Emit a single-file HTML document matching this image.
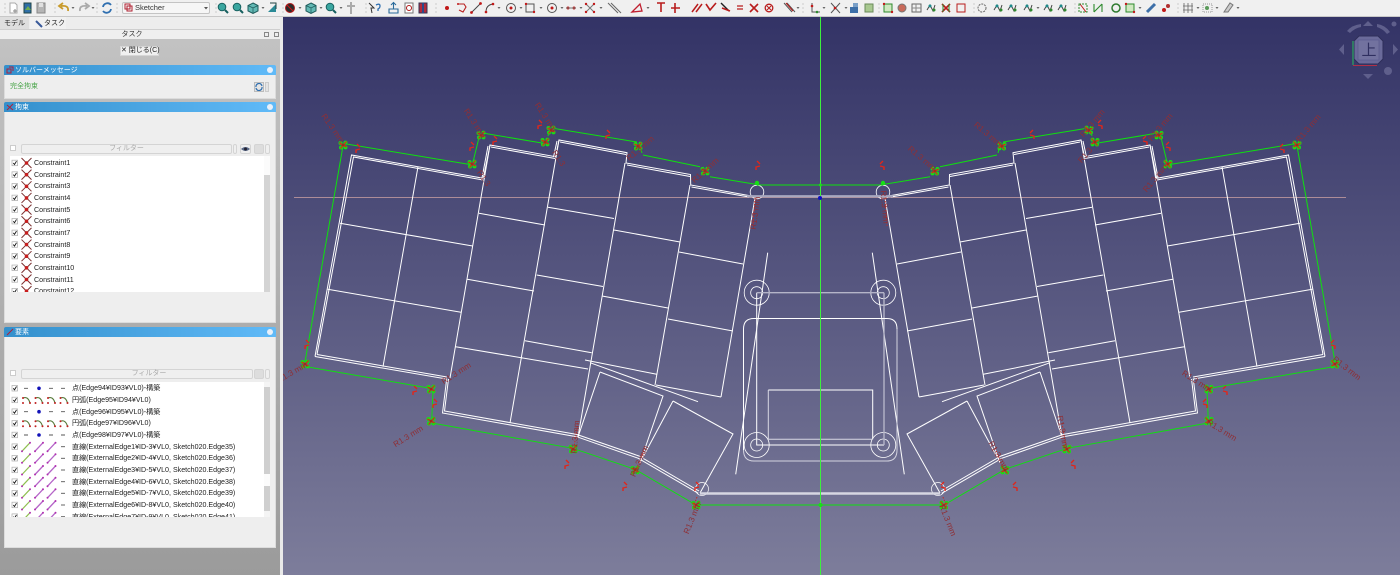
<!DOCTYPE html>
<html lang="ja"><head><meta charset="utf-8"><title>FreeCAD Sketcher</title>
<style>
html,body{margin:0;padding:0;width:1400px;height:575px;overflow:hidden;background:#f0f0f0;font-family:"Liberation Sans","Noto Sans CJK JP",sans-serif;color:#222}
*{box-sizing:border-box}
.a{position:absolute}
#view{position:absolute;left:283px;top:17px;width:1117px;height:558px;background:linear-gradient(#333366,#7d7d9b)}
#tb{position:absolute;left:0;top:0;width:1400px;height:17px;background:#f0f0f0;border-bottom:1px solid #c8c8c8;filter:blur(.35px)}
#side{position:absolute;left:0;top:17px;width:283px;height:558px;background:#ededed;filter:blur(.3px);overflow:hidden}
#gray{position:absolute;left:0;top:21px;width:280px;height:537px;background:linear-gradient(#c2c2c2,#9b9b9b)}
.sec{position:absolute;left:4px;width:272px;background:#eeeeee;border:1px solid #dcdcdc;border-top:0}
.hd{position:absolute;left:4px;width:272px;height:10px;background:linear-gradient(90deg,#3490cc,#60baf8);color:#fff;font-size:7px;line-height:12px;padding-left:11px;border-radius:2px 2px 0 0;overflow:hidden}
.x{position:absolute;right:3px;top:2px;width:6px;height:6px;border-radius:50%;background:#e8f0fa}
.flt{position:absolute;height:10px;background:#efefef;border:1px solid #d4d4d4;border-radius:2px;color:#aaa;font-size:7px;line-height:8px;text-align:center}
.list{position:absolute;left:10px;width:260px;background:#fff;overflow:hidden}
.r{position:absolute;white-space:nowrap;font-size:7.1px;line-height:10px;color:#222}
</style></head><body>

<div id="view"></div>

<svg class="a" style="left:0;top:0" width="1400" height="575" viewBox="0 0 1400 575" fill="none">
<defs>
<g id="cl">
<circle cx="-2.5" cy="-2" r="2" fill="#15e015"/><circle cx="2.5" cy="-2.4" r="2" fill="#15e015"/><circle cx="-2" cy="2.5" r="2" fill="#15e015"/><circle cx="2.5" cy="2.4" r="2" fill="#15e015"/>
<path d="M-3.5-2 3.5 2M-2.500 3.500 3.500-3.500" stroke="#d8241a" stroke-width="1.300"/>
<circle cx="0" cy="0" r="1.300" fill="#a82a1a"/>
</g>
<g id="hk"><path d="M-2 4-2 1 2 0M-1-5 2-2" stroke="#e0261a" stroke-width="1.400"/></g>
<g id="half">
 <g stroke="#fff" stroke-width="1">
 <path d="M418 166.7 383 366.7M340 223.3 472.7 246M327.7 289.3 461 312.3"/>
 <path d="M490 145 450 378M479 213.3 545 225M467.3 279.3 534 291M455.7 346.7 588 369"/>
 <path d="M559 140 510 423M548 207.3 614 218.5M536.7 275 603 286.5M525 340.7 591.7 352.7"/>
 <path d="M625 163 578 437M614 230 680 242M602 296 668 308M585 360 656.7 374.3"/>
 <path d="M690 185 655 385M679 252 743 264M668 319 733 331M656 385 721 397M755 198 721 397"/>
 <path d="M590 362.7 698 401.7M600 372 663 396 640 463M600 372 578 437M673 401 733 434 700 493M673 401 643 457"/>
 <path d="M315 356.5 351.5 155 483.3 178.3 490 145 555.5 156.7 559 140 627 152.7 626 163 690.5 174.5 690.7 185 750 195.7"/>
 <path d="M317 354.5 353.5 157 483 180M488 146 482 178M491 147 555 158.5M557 141 553.5 157M560 142 626 154.5M627 165 690 176.5M691.5 187 749 197"/>
 <path d="M315 356.5 446.7 379 442.5 413 576.7 436.7 638.3 458.3 698.3 493.3"/>
 <path d="M317 354.5 447 377M448.5 379 444.5 411 577 434.5 639 456 699 491"/>
 <path d="M767.7 252.7 735.7 474.3"/>
 <circle cx="757" cy="192" r="6.8" stroke-width=".8"/><circle cx="702" cy="489" r="6.5" stroke-width=".7"/>
 <circle cx="756.7" cy="292.7" r="12.5" stroke-width=".8"/><circle cx="756.7" cy="292.7" r="6" stroke-width=".8"/>
 <circle cx="756.7" cy="445" r="12.5" stroke-width=".8"/><circle cx="756.7" cy="445" r="6" stroke-width=".8"/>
 </g>
 <g stroke="#0fe00f" stroke-width="1">
 <path d="M305 362 343 146M343.3 143.5 473 165M473 162 480 133.5M484 133.3 542 143M548 136 550 128.3M553 128.3 637 142M640 145 642 153M643 155 700 166.7M703 167 707 175M710 176.7 757 184.5"/>
 <path d="M757 185 820 185M306.7 366.7 430 388.3M433 391 431.7 420M433.3 423.3 572.7 448.3 635 469.3 696 505 820 505"/>
 </g>
 <use href="#cl" x="343" y="145"/><use href="#cl" x="472" y="164"/><use href="#cl" x="481" y="135"/><use href="#cl" x="545" y="142"/><use href="#cl" x="551" y="130"/><use href="#cl" x="638" y="146"/><use href="#cl" x="705" y="171"/><use href="#cl" x="305" y="364"/><use href="#cl" x="431" y="389"/><use href="#cl" x="431" y="421"/><use href="#cl" x="573" y="449"/><use href="#cl" x="635" y="470"/><use href="#cl" x="696" y="505"/>
 <circle cx="757" cy="183" r="2.2" fill="#15e015"/>
 <use href="#hk" x="358" y="149"/><use href="#hk" x="472" y="147"/><use href="#hk" x="495" y="141"/><use href="#hk" x="540" y="125"/><use href="#hk" x="608" y="135"/><use href="#hk" x="758" y="166"/><use href="#hk" x="415" y="391"/><use href="#hk" x="435" y="404"/><use href="#hk" x="307" y="345"/><use href="#hk" x="567" y="465"/><use href="#hk" x="625" y="487"/><use href="#hk" x="697" y="487"/>
 <path d="M755 198 753 226M578 423 574 447M645 448 636 470M697 497 693 508" stroke="#c82a20" stroke-width="1" stroke-dasharray="1.5 1.5"/>
</g>
</defs>

<path d="M294 197.5H1346" stroke="#ad8c98" stroke-width="1"/>
<use href="#half"/>
<use href="#half" transform="translate(1640 0) scale(-1 1)"/>

<g stroke="#fff" stroke-width="1">
<path d="M756.7 292.7V445H884" />
<path d="M756.7 292.7H884" stroke="#b4b4c8" stroke-width="1.4"/>
<path d="M884 292.7V445" stroke="#b4b4c8" stroke-width="1.4"/>
<path d="M743.5 450V329Q743.5 318.5 754 318.5H887Q897 318.5 897 329"/>
<path d="M897 329V450Q897 461 887 461H754Q743.5 461 743.5 450" stroke="#d4d4e0"/>
<path d="M768.3 390H872.7V439.3" /><path d="M768.3 390V439.3H872.7" stroke="#d8d8e4"/>
</g>
<path d="M700 493.5H940" stroke="#d6d6e2" stroke-width="2.4"/>
<path d="M747 196.2H893" stroke="#a7a7bf" stroke-width="2.2"/>
<path d="M820.5 17V575" stroke="#3df03d" stroke-width="1"/>
<circle cx="820" cy="198" r="2" fill="#1010c0"/>
<circle cx="820.5" cy="185" r="1.5" fill="#15e015"/><circle cx="820.5" cy="505" r="2" fill="#15e015"/>

<g font-family="Liberation Sans" font-size="8.200" fill="#8f2f35" text-anchor="middle" style="filter:blur(.25px)">
<text x="333" y="131" transform="rotate(55 333 128)">R1.3 mm</text>
<text x="475" y="126" transform="rotate(57 475 123)">R1.3 mm</text>
<text x="546" y="120" transform="rotate(57 546 117)">R1.3 mm</text>
<text x="640" y="151" transform="rotate(-40 640 148)">R1.3 mm</text>
<text x="705" y="173" transform="rotate(-42 705 170)">R1.3 mm</text>
<text x="755" y="216" transform="rotate(-82 755 213)">R1.3 mm</text>
<text x="484" y="181" transform="rotate(55 484 178)">R1.3</text>
<text x="559" y="161" transform="rotate(57 559 158)">R1.3</text>
<text x="408" y="439" transform="rotate(-32 408 436)">R1.3 mm</text>
<text x="456" y="376" transform="rotate(-33 456 373)">R1.3 mm</text>
<text x="575" y="440" transform="rotate(-85 575 437)">R1.3 mm</text>
<text x="639" y="464" transform="rotate(-66 639 461)">R1.3 mm</text>
<text x="692" y="521" transform="rotate(-68 692 518)">R1.3 mm</text>
<text x="292" y="375" transform="rotate(-30 292 372)">R1.3 mm</text>
<text x="1308" y="131" transform="rotate(-50 1308 128)">R1.3 mm</text>
<text x="1160" y="130" transform="rotate(-50 1160 127)">R1.3 mm</text>
<text x="1092" y="126" transform="rotate(-50 1092 123)">R1.3 mm</text>
<text x="988" y="137" transform="rotate(40 988 134)">R1.3 mm</text>
<text x="922" y="161" transform="rotate(40 922 158)">R1.3 mm</text>
<text x="1155" y="181" transform="rotate(-50 1155 178)">R1.3 mm</text>
<text x="1085" y="158" transform="rotate(-50 1085 155)">R1.3</text>
<text x="1222" y="433" transform="rotate(32 1222 430)">R1.3 mm</text>
<text x="1197" y="384" transform="rotate(33 1197 381)">R1.3 mm</text>
<text x="1063" y="435" transform="rotate(80 1063 432)">R1.3 mm</text>
<text x="999" y="459" transform="rotate(60 999 456)">R1.3 mm</text>
<text x="948" y="523" transform="rotate(68 948 520)">R1.3 mm</text>
<text x="885" y="210" transform="rotate(85 885 207)">R1.3 mm</text>
<text x="1347" y="371" transform="rotate(38 1347 368)">R1.3 mm</text>
</g>

<!-- navi cube -->
<g>
<path d="M1359 36H1378L1383 41V59L1378 64H1359L1354 59V41Z" fill="#6a6a9a" stroke="#2e2e5a" stroke-width="1"/>
<path d="M1358 40H1379V60H1358Z" fill="#72729f" stroke="#55558a" stroke-width=".6"/>
<path d="M1353 41V65" stroke="#2f8a63" stroke-width="1.6"/><path d="M1353 65.5H1377" stroke="#b03048" stroke-width="1"/>
<text x="1369" y="55" font-size="15" text-anchor="middle" fill="#2f2f60" font-family="Noto Sans CJK JP">上</text>
<g fill="#5f5f8c">
<path d="M1368 21 1373 26H1363Z"/><path d="M1344 44V55L1339 49.5Z"/><path d="M1393 44V55L1398 49.5Z"/><path d="M1363 74H1373L1368 79Z"/>
<path d="M1347 31Q1352 25 1361 24L1361 27Q1355 28 1350 33Z"/><path d="M1377 24Q1385 25 1390 32L1387 34Q1383 29 1377 27Z"/>
<circle cx="1394" cy="24" r="2.5"/><circle cx="1388" cy="71" r="4"/>
</g>
</g>
</svg>

<div id="side">
 <div id="gray"></div>
 <div class="a" style="left:0;top:0;width:29px;height:13px;background:#dedede;font-size:7px;line-height:14px;text-align:center">モデル</div>
 <div class="a" style="left:30px;top:0;width:36px;height:13px;background:#f1f1f1;font-size:7px;line-height:14px;padding-left:14px">タスク</div>
 <svg class="a" style="left:35px;top:3px" width="8" height="8"><path d="M1 1 7 7" stroke="#3a5a9a" stroke-width="2"/></svg>
 <div class="a" style="left:0;top:12px;width:280px;height:1px;background:#cfcfcf"></div>
 <div class="a" style="left:0;top:13px;width:280px;height:9px;background:#efefef;font-size:7px;line-height:10px;text-align:center;padding-right:16px;color:#333">タスク</div>
 <div class="a" style="left:264px;top:15px;width:5px;height:5px;border:1px solid #888"></div>
 <div class="a" style="left:274px;top:15px;width:5px;height:5px;border:1px solid #888"></div>

 <div class="a" style="left:120px;top:29px;width:39px;height:10px;background:#f0f0f0;border:1px solid #d6d6d6;font-size:7px;line-height:8px;text-align:center;white-space:nowrap">✕ 閉じる(C)</div>

 <div class="sec" style="top:58px;height:24px"></div>
 <div class="hd" style="top:48px">ソルバーメッセージ<span class="x"></span></div>
 <svg class="a" style="left:6px;top:49px" width="8" height="8"><path d="M1 3H5V7H1ZM3 1H7V5" stroke="#b0203a" fill="none"/></svg>
 <div class="a" style="left:10px;top:65px;font-size:7px;line-height:10px;color:#4ca64c">完全拘束</div>
 <div class="a" style="left:254px;top:65px;width:10px;height:10px;background:#e4e4e4;border:1px solid #bbb"></div>
 <svg class="a" style="left:255px;top:66px" width="8" height="8"><path d="M1 4A3 3 0 0 1 7 3M7 4A3 3 0 0 1 1 5" stroke="#2f6fb0" fill="none" stroke-width="1.2"/></svg>
 <div class="a" style="left:265px;top:65px;width:4px;height:10px;background:#e4e4e4;border:1px solid #ccc"></div>

 <div class="sec" style="top:95px;height:211px"></div>
 <div class="hd" style="top:85px">拘束<span class="x"></span></div>
 <svg class="a" style="left:6px;top:86px" width="8" height="8"><path d="M1 7 7 1M1 2 7 7" stroke="#b0203a"/></svg>
 <div class="a" style="left:10px;top:128px;width:6px;height:6px;background:#fff;border:1px solid #ccc"></div>
 <div class="flt" style="left:21px;top:127px;width:211px">フィルター</div>
 <div class="flt" style="left:233px;top:127px;width:4px"></div>
 <div class="flt" style="left:240px;top:127px;width:11px"></div>
 <svg class="a" style="left:241px;top:129px" width="9" height="6"><path d="M0 3Q4.500-1 9 3 4.500 7 0 3Z" fill="#5a6a88"/><circle cx="4.500" cy="3" r="1.500" fill="#223"/></svg>
 <div class="flt" style="left:254px;top:127px;width:10px;background:#ddd"></div>
 <div class="flt" style="left:265px;top:127px;width:5px"></div>

 <div class="list" style="top:139px;height:136px">
  <div class="r" style="left:24px;top:2px">Constraint1</div>
  <div class="r" style="left:24px;top:13.650px">Constraint2</div>
  <div class="r" style="left:24px;top:25.300px">Constraint3</div>
  <div class="r" style="left:24px;top:36.950px">Constraint4</div>
  <div class="r" style="left:24px;top:48.600px">Constraint5</div>
  <div class="r" style="left:24px;top:60.250px">Constraint6</div>
  <div class="r" style="left:24px;top:71.900px">Constraint7</div>
  <div class="r" style="left:24px;top:83.550px">Constraint8</div>
  <div class="r" style="left:24px;top:95.200px">Constraint9</div>
  <div class="r" style="left:24px;top:106.850px">Constraint10</div>
  <div class="r" style="left:24px;top:118.500px">Constraint11</div>
  <div class="r" style="left:24px;top:130.150px">Constraint12</div>
  <svg class="a" style="left:0;top:0" width="24" height="136" fill="none">
   <defs><g id="cr"><rect x="2" y="-2.800" width="5.500" height="5.500" fill="#fff" stroke="#aaa" stroke-width=".7"/><path d="M3.300 0 4.500 1.500 6.500-1.800" stroke="#111" stroke-width=".9"/><path d="M11.500-5 21.500 5M21.500-5 11.500 5" stroke="#7a3030" stroke-width="1"/><circle cx="16.500" cy="0" r="1.800" fill="#c81e1e"/></g></defs>
   <use href="#cr" y="7"/><use href="#cr" y="18.650"/><use href="#cr" y="30.300"/><use href="#cr" y="41.950"/><use href="#cr" y="53.600"/><use href="#cr" y="65.250"/><use href="#cr" y="76.900"/><use href="#cr" y="88.550"/><use href="#cr" y="100.200"/><use href="#cr" y="111.850"/><use href="#cr" y="123.500"/><use href="#cr" y="135.150"/>
  </svg>
  <div class="a" style="left:253.500px;top:0;width:6.500px;height:136px;background:#d4d4d4"></div>
  <div class="a" style="left:253.500px;top:0;width:6.500px;height:19px;background:#fbfbfb"></div>
 </div>

 <div class="sec" style="top:320px;height:211px"></div>
 <div class="hd" style="top:310px">要素<span class="x"></span></div>
 <svg class="a" style="left:6px;top:311px" width="8" height="8"><path d="M1 7 7 1" stroke="#b0203a"/></svg>
 <div class="a" style="left:10px;top:353px;width:6px;height:6px;background:#fff;border:1px solid #ccc"></div>
 <div class="flt" style="left:21px;top:352px;width:232px;padding-left:24px">フィルター</div>
 <div class="flt" style="left:254px;top:352px;width:10px;background:#ddd"></div>
 <div class="flt" style="left:265px;top:352px;width:5px"></div>

 <div class="list" style="top:365px;height:135px">
  <div class="r" style="left:62px;top:1.300px">点(Edge94¥ID93¥VL0)-構築</div>
  <div class="r" style="left:62px;top:13px">円弧(Edge95¥ID94¥VL0)</div>
  <div class="r" style="left:62px;top:24.700px">点(Edge96¥ID95¥VL0)-構築</div>
  <div class="r" style="left:62px;top:36.300px">円弧(Edge97¥ID96¥VL0)</div>
  <div class="r" style="left:62px;top:48px">点(Edge98¥ID97¥VL0)-構築</div>
  <div class="r" style="left:62px;top:59.700px">直線(ExternalEdge1¥ID-3¥VL0, Sketch020.Edge35)</div>
  <div class="r" style="left:62px;top:71.300px">直線(ExternalEdge2¥ID-4¥VL0, Sketch020.Edge36)</div>
  <div class="r" style="left:62px;top:83px">直線(ExternalEdge3¥ID-5¥VL0, Sketch020.Edge37)</div>
  <div class="r" style="left:62px;top:94.700px">直線(ExternalEdge4¥ID-6¥VL0, Sketch020.Edge38)</div>
  <div class="r" style="left:62px;top:106.300px">直線(ExternalEdge5¥ID-7¥VL0, Sketch020.Edge39)</div>
  <div class="r" style="left:62px;top:118px">直線(ExternalEdge6¥ID-8¥VL0, Sketch020.Edge40)</div>
  <div class="r" style="left:62px;top:129.700px">直線(ExternalEdge7¥ID-9¥VL0, Sketch020.Edge41)</div>
  <svg class="a" style="left:0;top:0" width="62" height="135" fill="none">
   <defs>
   <g id="ck"><rect x="2" y="-2.800" width="5.500" height="5.500" fill="#fff" stroke="#aaa" stroke-width=".7"/><path d="M3.300 0 4.500 1.500 6.500-1.800" stroke="#111" stroke-width=".9"/></g>
   <g id="ep"><use href="#ck"/><path d="M14 0H18M39 0H43M51 0H55" stroke="#555" stroke-width=".9"/><circle cx="29" cy="0" r="1.800" fill="#1212b8"/></g>
   <g id="ea"><use href="#ck"/><g id="a1"><path d="M13 -2Q18-4 20 3" stroke="#567a3a" stroke-width="1.100"/><circle cx="13" cy="-2" r="1" fill="#c02020"/><circle cx="13" cy="3" r="1" fill="#c02020"/><circle cx="20" cy="3" r="1" fill="#c02020"/></g><use href="#a1" x="12.500"/><use href="#a1" x="25"/><use href="#a1" x="37.500"/></g>
   <g id="el"><use href="#ck"/><g id="l1"><path d="M12 4.500 20-4" stroke="#8fbf50" stroke-width="1.200"/><circle cx="20" cy="-4" r="1" fill="#b030b0"/><circle cx="12" cy="4.500" r="1" fill="#b030b0"/></g><path d="M25 4.500 33-4M37.500 4.500 45.500-4" stroke="#b565c8" stroke-width="1.300"/><circle cx="33" cy="-4" r="1" fill="#b030b0"/><circle cx="25" cy="4.500" r="1" fill="#b030b0"/><circle cx="45.500" cy="-4" r="1" fill="#b030b0"/><circle cx="37.500" cy="4.500" r="1" fill="#b030b0"/><path d="M51 0H55" stroke="#555" stroke-width=".9"/></g>
   </defs>
   <use href="#ep" y="6.300"/><use href="#ea" y="18"/><use href="#ep" y="29.700"/><use href="#ea" y="41.300"/><use href="#ep" y="53"/>
   <use href="#el" y="64.700"/><use href="#el" y="76.300"/><use href="#el" y="88"/><use href="#el" y="99.700"/><use href="#el" y="111.300"/><use href="#el" y="123"/><use href="#el" y="134.700"/>
  </svg>
  <div class="a" style="left:253.500px;top:0;width:6.500px;height:135px;background:#cfcfcf"></div>
  <div class="a" style="left:253.500px;top:0;width:6.500px;height:5px;background:#f4f4f4"></div>
  <div class="a" style="left:253.500px;top:92px;width:6.500px;height:12px;background:#fbfbfb"></div>
  <div class="a" style="left:253.500px;top:129px;width:6.500px;height:6px;background:#f4f4f4"></div>
 </div>
</div>
<div class="a" style="left:280px;top:17px;width:3px;height:558px;background:#e9e9e9"></div>

<div id="tb">
<div class="a" style="left:122px;top:2px;width:88px;height:12px;background:#f6f6f6;border:1px solid #c4c4c4;border-radius:2px;font-size:7.500px;line-height:10px;padding-left:12px;color:#333">Sketcher</div>
<svg class="a" style="left:0;top:0" width="1400" height="16" fill="none">
<defs>
<g id="mg"><circle cx="-1" cy="-1" r="3.800" fill="#3aa6a0" stroke="#17605f"/><path d="M2 2 5 5" stroke="#17605f" stroke-width="2"/></g>
<g id="cb"><path d="M0-5 5-2.500V3L0 5.500-5 3V-2.500Z" fill="#62b8b4" stroke="#1d5a5a"/><path d="M-5-2.500 0 0 5-2.500M0 0V5.500" stroke="#1d5a5a" stroke-width=".7"/></g>
<g id="dt"><path d="M0 3.500V4.500M0 7.500V8.500M0 11.500V12.500" stroke="#aaa"/></g>
<path id="da" d="M-1.500 7H1.500L0 9Z" fill="#666"/>
<g id="rd"><circle cx="0" cy="0" r="2" fill="#c01818"/></g>
<g id="rl"><path d="M-4.500 4.500 4.500-4.500" stroke="#444" stroke-width="1"/><circle cx="-4.500" cy="4.500" r="1.400" fill="#c01818"/><circle cx="4.500" cy="-4.500" r="1.400" fill="#c01818"/></g>
<g id="rc"><circle cx="0" cy="0" r="4.500" stroke="#555"/><circle cx="0" cy="0" r="1.500" fill="#c01818"/></g>
<g id="rx"><path d="M-4-4 4 4M4-4-4 4" stroke="#b81c1c" stroke-width="1.600"/></g>
<g id="rt"><path d="M-4-4H4M0-4V5" stroke="#b81c1c" stroke-width="1.600"/></g>
<g id="gr"><path d="M-4-4H4V4H-4Z" stroke="#2e8a2e" fill="#cfe8c0"/><circle cx="-4" cy="-4" r="1.200" fill="#c01818"/><circle cx="4" cy="4" r="1.200" fill="#c01818"/></g>
<g id="db"><path d="M-4 2-1-3 2 3 4-3" stroke="#444"/><circle cx="-1" cy="-2" r="1.500" fill="#1d8a8a"/><circle cx="3" cy="2" r="1.500" fill="#2e8a2e"/></g>
</defs>
<g>
<use href="#dt" x="5"/><use href="#dt" x="55"/><use href="#dt" x="97"/><use href="#dt" x="117"/><use href="#dt" x="216"/><use href="#dt" x="283"/><use href="#dt" x="366"/><use href="#dt" x="436"/><use href="#dt" x="803"/><use href="#dt" x="879"/><use href="#dt" x="974"/><use href="#dt" x="1075"/><use href="#dt" x="1178"/>
<path d="M10 3H15L17 5V13H10Z" fill="#fff" stroke="#aaa"/><path d="M13 11H17M15 9V13" stroke="#888"/>
<path d="M24 3H31V13H24Z" fill="#2f6fa8" stroke="#244"/><path d="M25 10 28 6 31 10Z" fill="#6fae4f"/>
<path d="M37 3H45V13H37Z" fill="#b5b5b5" stroke="#888"/><path d="M39 3H43V7H39Z" fill="#e0e0e0"/>
<path d="M68 11Q69 5 61 6M63 3 59 6 63 9" stroke="#c89a2a" stroke-width="1.800"/><use href="#da" x="73"/>
<path d="M80 11Q79 5 87 6M85 3 89 6 85 9" stroke="#aaa" stroke-width="1.800"/><use href="#da" x="93"/>
<path d="M103 7A4.500 4.500 0 0 1 111 5M111 9A4.500 4.500 0 0 1 103 11" stroke="#2f6fb0" stroke-width="1.800"/>
<path d="M125 4H130V9H125ZM127 6H132V11H127Z" stroke="#b02030"/><path d="M204 7H208L206 9.500Z" fill="#555"/>
<use href="#mg" x="223" y="8"/><use href="#mg" x="238" y="8"/><use href="#cb" x="253" y="8"/><use href="#da" x="263"/>
<path d="M268 12 276 4V12Z" fill="#2a8a96"/><path d="M270 3H276V9" stroke="#244"/>
<circle cx="290" cy="8" r="4.500" fill="#2b2b2b" stroke="#b01818"/><path d="M287 5 293 11" stroke="#c01818" stroke-width="1.200"/><use href="#da" x="300"/>
<use href="#cb" x="311" y="8"/><use href="#da" x="321"/><use href="#mg" x="331" y="8"/><use href="#da" x="341"/>
<path d="M351 2V14M347 6H355" stroke="#aaa" stroke-width="2"/>
<path d="M369 3 374 8 371 8 372 13" stroke="#333"/><path d="M376 5Q380 3 380 6 380 8 378 9V11" stroke="#2f6fb0" stroke-width="1.300"/>
<path d="M389 13H398V9H389ZM393.500 9V3M391 5 393.500 2.500 396 5" stroke="#2a6a9a" stroke-width="1.100"/>
<path d="M405 3H413V13H405Z" stroke="#777" fill="#fff"/><circle cx="409" cy="8" r="2.500" stroke="#b01818"/>
<path d="M419 3H427V13H419Z" fill="#b22a3a" stroke="#335"/><path d="M423 3V13" stroke="#2a4a8a" stroke-width="2"/>
<use href="#rd" x="447" y="8"/>
<path d="M458 4H464L466 7 463 12 459 10" stroke="#b82020" stroke-width="1.100"/><circle cx="458" cy="4" r="1" fill="#c01818"/>
<use href="#rl" x="476" y="8"/>
<path d="M486 12Q486 5 493 4" stroke="#444"/><circle cx="486" cy="12" r="1.300" fill="#c01818"/><circle cx="493" cy="4" r="1.300" fill="#c01818"/><use href="#da" x="499"/>
<use href="#rc" x="511" y="8"/><use href="#da" x="521"/>
<path d="M526 4H534V12H526Z" stroke="#555"/><circle cx="526" cy="4" r="1.200" fill="#c01818"/><circle cx="534" cy="12" r="1.200" fill="#c01818"/><use href="#da" x="541"/>
<use href="#rc" x="552" y="8"/><use href="#da" x="562"/>
<circle cx="568" cy="8" r="1.500" fill="#c01818"/><circle cx="574" cy="8" r="1.500" fill="#c01818"/><path d="M566 8H576" stroke="#777"/><use href="#da" x="581"/>
<path d="M586 12 594 4M586 4 594 12" stroke="#777"/><circle cx="586" cy="12" r="1.200" fill="#c01818"/><circle cx="594" cy="4" r="1.200" fill="#c01818"/><circle cx="586" cy="4" r="1.200" fill="#c01818"/><circle cx="594" cy="12" r="1.200" fill="#c01818"/><use href="#da" x="601"/>
<path d="M608 3 618 13M611 3 621 13" stroke="#666"/>
<path d="M632 12 640 4 642 11Z" stroke="#c02030" stroke-width="1.300"/><use href="#da" x="648"/>
<use href="#rt" x="661" y="7"/><path d="M671 8H680M675 3V13" stroke="#b81c1c" stroke-width="1.600"/>
<path d="M692 12 698 4M696 12 702 4" stroke="#b81c1c" stroke-width="1.500"/>
<path d="M706 4 710 10 716 3" stroke="#b81c1c" stroke-width="1.600"/>
<path d="M721 3 729 11" stroke="#222" stroke-width="1.400"/><path d="M722 8 730 11" stroke="#b81c1c" stroke-width="1.600"/>
<path d="M737 6H743M737 9H743" stroke="#b81c1c" stroke-width="1.300"/>
<use href="#rx" x="754" y="8"/>
<circle cx="769" cy="8" r="3.800" stroke="#b81c1c" stroke-width="1.300"/><path d="M767 6 771 10M771 6 767 10" stroke="#b81c1c"/>
<path d="M784 3 792 12M787 3 795 12" stroke="#555"/><path d="M786 3 793 11" stroke="#b81c1c"/><use href="#da" x="798"/>
<path d="M812 3V12H820" stroke="#555"/><circle cx="812" cy="6" r="1.300" fill="#c01818"/><circle cx="817" cy="12" r="1.300" fill="#2e8a2e"/><use href="#da" x="824"/>
<path d="M831 3 840 13M840 3 831 13" stroke="#555"/><circle cx="835" cy="8" r="1.300" fill="#c01818"/><use href="#da" x="846"/>
<path d="M850 7H858V13H850Z" fill="#3d6fa8"/><path d="M853 3H858V7H853Z" fill="#7aa0c8"/>
<path d="M865 4H873V12H865Z" fill="#a8c890" stroke="#6a8a5a"/>
</g>
<g>
<use href="#gr" x="888" y="8"/>
<circle cx="902" cy="8" r="4" fill="#c86a5a" stroke="#777"/>
<path d="M912 4H921V12H912Z" stroke="#666"/><path d="M912 8H921M916 4V12" stroke="#888"/>
<use href="#db" x="931" y="8"/>
<use href="#rx" x="946" y="8"/><path d="M943 4V12M949 4V12" stroke="#2e8a2e"/>
<path d="M957 4H965V12H957Z" stroke="#b81c1c"/>
<circle cx="982" cy="8" r="4" stroke="#666" stroke-dasharray="2 1"/>
<use href="#db" x="998" y="8"/><use href="#db" x="1012" y="8"/><use href="#db" x="1028" y="8"/><use href="#da" x="1038"/>
<use href="#db" x="1048" y="8"/><use href="#db" x="1062" y="8"/>
<path d="M1080 4 1086 12" stroke="#c01818"/><path d="M1079 4H1087V12H1079Z" stroke="#2e8a2e" stroke-dasharray="2 1"/>
<path d="M1094 4V12M1102 4V12M1094 12 1102 4" stroke="#2e8a2e" stroke-width="1.100"/>
<circle cx="1116" cy="8" r="4" stroke="#2e7a2e" stroke-width="1.500"/>
<use href="#gr" x="1130" y="8"/><use href="#da" x="1140"/>
<path d="M1147 12 1155 4" stroke="#3d6fa8" stroke-width="3"/>
<circle cx="1164" cy="10" r="2" fill="#c01818"/><circle cx="1168" cy="6" r="2" fill="#b03030"/>
<path d="M1184 3V13M1188 3V13M1192 3V13M1183 6H1193M1183 10H1193" stroke="#666" stroke-width=".8"/><use href="#da" x="1198"/>
<path d="M1203 4H1212V12H1203Z" stroke="#999" stroke-dasharray="1 1"/><circle cx="1207" cy="8" r="2" fill="#5a9a5a"/><use href="#da" x="1217"/>
<path d="M1224 12 1230 3 1233 5 1228 12Z" fill="#ccc" stroke="#777"/><use href="#da" x="1238"/>
</g>
</svg>
</div>
</body></html>
